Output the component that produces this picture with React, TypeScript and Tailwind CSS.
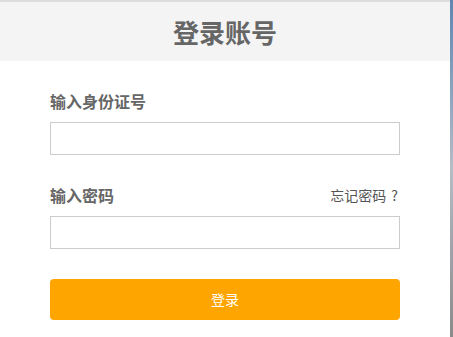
export default function App() {
  return (
    <div
      className="flex w-[453px] h-[337px] bg-white overflow-hidden"
      style={{ fontFamily: '"Noto Sans CJK SC", "Noto Sans", sans-serif' }}
    >
      <div className="flex-1 flex flex-col">
        {/* Header */}
        <div className="h-[2px] bg-[#dcdcdc]" />
        <div className="h-[59px] bg-[#f4f4f4] flex items-center justify-center">
          <h1 className="text-[26px] font-bold text-[#666] leading-none">登录账号</h1>
        </div>

        {/* Form */}
        <div className="px-[50px] pt-[30px] flex flex-col">
          <label className="text-[16px] font-bold text-[#666] leading-[20px]">输入身份证号</label>
          <input className="mt-[11px] h-[33px] border border-[#ccc] outline-none px-2 text-sm" />

          <div className="mt-[30px] flex items-end justify-between">
            <label className="text-[16px] font-bold text-[#666] leading-[20px]">输入密码</label>
            <a className="text-[14px] text-[#555] leading-[18px] mb-[1px] mr-[2px]">
              忘记密码<span className="ml-[5px]">?</span>
            </a>
          </div>
          <input
            type="password"
            className="mt-[11px] h-[33px] border border-[#ccc] outline-none px-2 text-sm"
          />

          <button className="mt-[30px] h-[41px] rounded-[4px] bg-[#ffa500] text-white text-[14px]">
            登录
          </button>
        </div>
      </div>

      {/* Window edge */}
      <div className="w-[3px] bg-gradient-to-b from-[#5f86b2] via-[#b4bcc6] to-[#8a8a8a]" />
    </div>
  );
}
